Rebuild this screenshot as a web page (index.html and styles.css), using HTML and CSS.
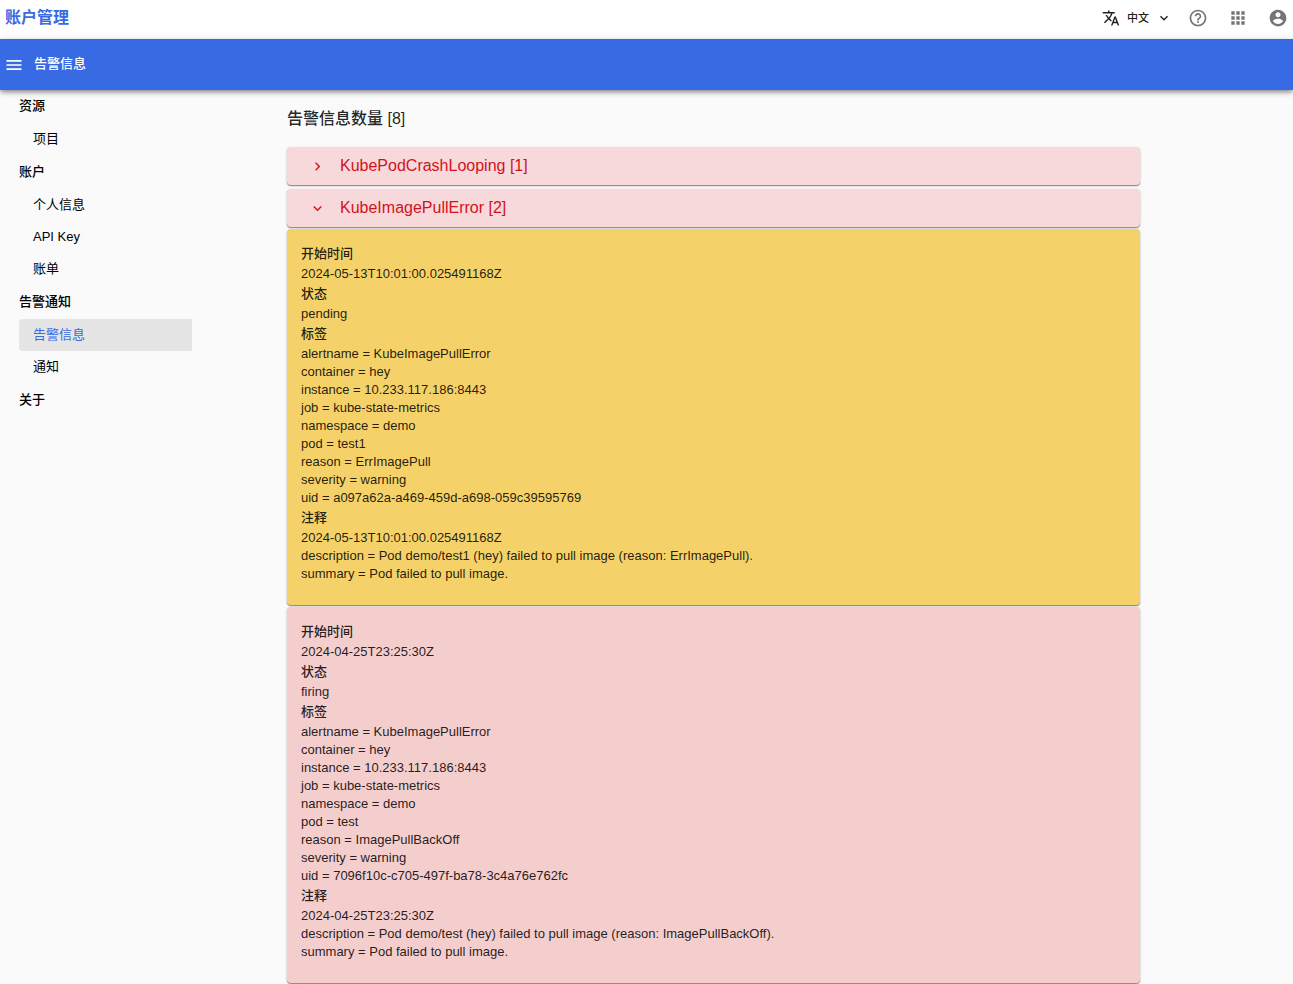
FILE: index.html
```html
<!DOCTYPE html>
<html lang="zh-CN">
<head>
<meta charset="utf-8">
<meta name="viewport" content="width=device-width, initial-scale=1">
<title>账户管理</title>
<link rel="stylesheet" href="styles.css">
</head>
<body>
<header class="topbar">
  <a class="brand" href="#">账户管理</a>
  <div class="tools">
    <div class="language">
      <svg class="icon icon-translate" viewBox="0 0 24 24" aria-hidden="true"><path d="M12.87 15.07l-2.54-2.51.03-.03c1.74-1.94 2.98-4.17 3.71-6.53H17V4h-7V2H8v2H1v1.99h11.17C11.5 7.92 10.44 9.75 9 11.35 8.07 10.32 7.3 9.19 6.69 8h-2c.73 1.63 1.73 3.17 2.98 4.56l-5.09 5.02L4 19l5-5 3.11 3.11.76-2.04zM18.5 10h-2L12 22h2l1.12-3h4.75L21 22h2l-4.5-12zm-2.62 7l1.62-4.33L19.12 17h-3.24z"/></svg>
      <select class="language-select" aria-label="语言"><option>中文</option></select>
      <svg class="icon language-arrow" viewBox="0 0 24 24" aria-hidden="true"><path d="M16.59 8.59 12 13.17 7.41 8.59 6 10l6 6 6-6z"/></svg>
    </div>
    <button class="tool" type="button" aria-label="帮助">
      <svg class="icon" viewBox="0 0 24 24"><path d="M11 18h2v-2h-2v2zm1-16C6.48 2 2 6.48 2 12s4.48 10 10 10 10-4.48 10-10S17.52 2 12 2zm0 18c-4.41 0-8-3.59-8-8s3.59-8 8-8 8 3.59 8 8-3.59 8-8 8zm0-14c-2.21 0-4 1.79-4 4h2c0-1.1.9-2 2-2s2 .9 2 2c0 2-3 1.75-3 5h2c0-2.25 3-2.5 3-5 0-2.21-1.79-4-4-4z"/></svg>
    </button>
    <button class="tool" type="button" aria-label="应用">
      <svg class="icon" viewBox="0 0 24 24"><path d="M4 8h4V4H4v4zm6 12h4v-4h-4v4zm-6 0h4v-4H4v4zm0-6h4v-4H4v4zm6 0h4v-4h-4v4zm6-10v4h4V4h-4zm-6 4h4V4h-4v4zm6 6h4v-4h-4v4zm0 6h4v-4h-4v4z"/></svg>
    </button>
    <button class="tool" type="button" aria-label="账户">
      <svg class="icon" viewBox="0 0 24 24"><path d="M12 2C6.48 2 2 6.48 2 12s4.48 10 10 10 10-4.48 10-10S17.52 2 12 2zm0 3c1.66 0 3 1.34 3 3s-1.34 3-3 3-3-1.34-3-3 1.34-3 3-3zm0 14.2c-2.5 0-4.71-1.28-6-3.22.03-1.99 4-3.08 6-3.08 1.99 0 5.97 1.09 6 3.08-1.29 1.94-3.5 3.22-6 3.22z"/></svg>
    </button>
  </div>
</header>
<div class="appbar">
  <button class="menu" type="button" aria-label="菜单">
    <svg class="icon" viewBox="0 0 24 24"><path d="M3 18h18v-2H3v2zm0-5h18v-2H3v2zm0-7v2h18V6H3z"/></svg>
  </button>
  <span class="appbar-title">告警信息</span>
</div>
<div class="layout">
  <nav class="sidebar">
    <section class="nav-group">
      <h2 class="nav-heading">资源</h2>
      <a class="nav-link" href="#">项目</a>
    </section>
    <section class="nav-group">
      <h2 class="nav-heading">账户</h2>
      <a class="nav-link" href="#">个人信息</a>
      <a class="nav-link" href="#">API Key</a>
      <a class="nav-link" href="#">账单</a>
    </section>
    <section class="nav-group">
      <h2 class="nav-heading">告警通知</h2>
      <a class="nav-link active" href="#" aria-current="page">告警信息</a>
      <a class="nav-link" href="#">通知</a>
    </section>
    <section class="nav-group">
      <h2 class="nav-heading">关于</h2>
    </section>
  </nav>
  <main class="content">
    <h1 class="page-title">告警信息数量 [8]</h1>
    <div class="alerts">
      <section class="alert-group">
        <button class="paper alert-toggle" type="button" aria-expanded="false">
          <svg class="icon" viewBox="0 0 24 24" aria-hidden="true"><path d="M10 6 8.59 7.41 13.17 12l-4.58 4.59L10 18l6-6z"/></svg>
          KubePodCrashLooping [1]
        </button>
      </section>
      <section class="alert-group">
        <button class="paper alert-toggle" type="button" aria-expanded="true">
          <svg class="icon" viewBox="0 0 24 24" aria-hidden="true"><path d="M16.59 8.59 12 13.17 7.41 8.59 6 10l6 6 6-6z"/></svg>
          KubeImagePullError [2]
        </button>
        <dl class="paper detail pending">
          <dt>开始时间</dt>
          <dd>2024-05-13T10:01:00.025491168Z</dd>
          <dt>状态</dt>
          <dd>pending</dd>
          <dt>标签</dt>
          <dd>alertname = KubeImagePullError</dd>
          <dd>container = hey</dd>
          <dd>instance = 10.233.117.186:8443</dd>
          <dd>job = kube-state-metrics</dd>
          <dd>namespace = demo</dd>
          <dd>pod = test1</dd>
          <dd>reason = ErrImagePull</dd>
          <dd>severity = warning</dd>
          <dd>uid = a097a62a-a469-459d-a698-059c39595769</dd>
          <dt>注释</dt>
          <dd>2024-05-13T10:01:00.025491168Z</dd>
          <dd>description = Pod demo/test1 (hey) failed to pull image (reason: ErrImagePull).</dd>
          <dd>summary = Pod failed to pull image.</dd>
        </dl>
        <dl class="paper detail firing">
          <dt>开始时间</dt>
          <dd>2024-04-25T23:25:30Z</dd>
          <dt>状态</dt>
          <dd>firing</dd>
          <dt>标签</dt>
          <dd>alertname = KubeImagePullError</dd>
          <dd>container = hey</dd>
          <dd>instance = 10.233.117.186:8443</dd>
          <dd>job = kube-state-metrics</dd>
          <dd>namespace = demo</dd>
          <dd>pod = test</dd>
          <dd>reason = ImagePullBackOff</dd>
          <dd>severity = warning</dd>
          <dd>uid = 7096f10c-c705-497f-ba78-3c4a76e762fc</dd>
          <dt>注释</dt>
          <dd>2024-04-25T23:25:30Z</dd>
          <dd>description = Pod demo/test (hey) failed to pull image (reason: ImagePullBackOff).</dd>
          <dd>summary = Pod failed to pull image.</dd>
        </dl>
      </section>
    </div>
  </main>
</div>
</body>
</html>
```
FILE: styles.css
```css
* {
  box-sizing: border-box;
}

body {
  margin: 0;
  background: #fafafa;
  color: rgba(0, 0, 0, 0.87);
  font-family: "Liberation Sans", "Noto Sans CJK SC", sans-serif;
  font-size: 13px;
}

button,
select {
  margin: 0;
  padding: 0;
  border: 0;
  background: none;
  color: inherit;
  font: inherit;
  cursor: pointer;
}

.icon {
  display: block;
  flex: none;
  width: 20px;
  height: 20px;
  fill: currentColor;
}

.topbar {
  display: flex;
  align-items: center;
  justify-content: space-between;
  height: 39px;
  padding: 0 5px 4px;
  background: #fff;
}

.brand {
  padding-bottom: 4px;
  color: #376ae3;
  font-size: 16px;
  font-weight: 700;
  text-decoration: none;
}

.tools {
  display: flex;
  align-items: center;
  gap: 20px;
  color: #757575;
}

.language {
  position: relative;
  display: flex;
  align-items: center;
  gap: 7px;
  margin-right: -4px;
  color: #212121;
}

.icon-translate {
  width: 18px;
  height: 18px;
}

.language-select {
  width: 45px;
  appearance: none;
  font-size: 11px;
  font-weight: 500;
}

.language-arrow {
  position: absolute;
  right: 0;
  width: 16px;
  height: 16px;
  pointer-events: none;
}

.appbar {
  position: relative;
  display: flex;
  align-items: center;
  gap: 10px;
  height: 51px;
  padding: 0 4px;
  background: #376ae3;
  color: #fff;
  box-shadow: 0 2px 4px -1px rgba(0, 0, 0, 0.3), 0 3px 5px rgba(0, 0, 0, 0.18), 0 1px 9px rgba(0, 0, 0, 0.12);
}

.appbar-title {
  padding-bottom: 4px;
  font-weight: 500;
}

.layout {
  display: grid;
  grid-template-columns: 192px minmax(0, 1fr);
}

.sidebar {
  display: flex;
  flex-direction: column;
  gap: 2px;
  padding: 1px 0 0 19px;
  color: #000;
}

.nav-heading {
  margin: 0;
  padding-bottom: 2px;
  font-size: 13px;
  font-weight: 500;
  line-height: 30px;
}

.nav-link {
  display: block;
  padding-left: 14px;
  border-radius: 4px 0 0 4px;
  color: inherit;
  line-height: 32px;
  text-decoration: none;
}

.nav-link.active {
  background: #e5e5e5;
  color: #376ae3;
}

.content {
  padding: 17px 153px 16px 95px;
}

.page-title {
  margin: 0 0 16px;
  font-size: 16px;
  font-weight: 500;
  line-height: 24px;
}

.alerts {
  display: grid;
  gap: 4px;
}

.alert-group {
  display: grid;
  gap: 2px;
}

.paper {
  border-radius: 4px;
  box-shadow: 0 1px 1px rgba(0, 0, 0, 0.4), 0 1px 3px rgba(0, 0, 0, 0.15);
}

.alert-toggle {
  display: flex;
  align-items: center;
  gap: 14px;
  width: 100%;
  height: 38px;
  padding: 0 22px;
  background: #f8d9db;
  color: #d3121c;
  font-size: 16px;
  text-align: left;
}

.alert-toggle .icon {
  width: 17px;
  height: 17px;
}

.detail {
  margin: 0;
  padding: 14px 14px 22px;
}

.detail dt {
  font-weight: 500;
  line-height: 22px;
}

.detail dd {
  margin: 0;
  line-height: 18px;
}

.pending {
  background: #f5d269;
}

.firing {
  background: #f4cdcd;
}
```
